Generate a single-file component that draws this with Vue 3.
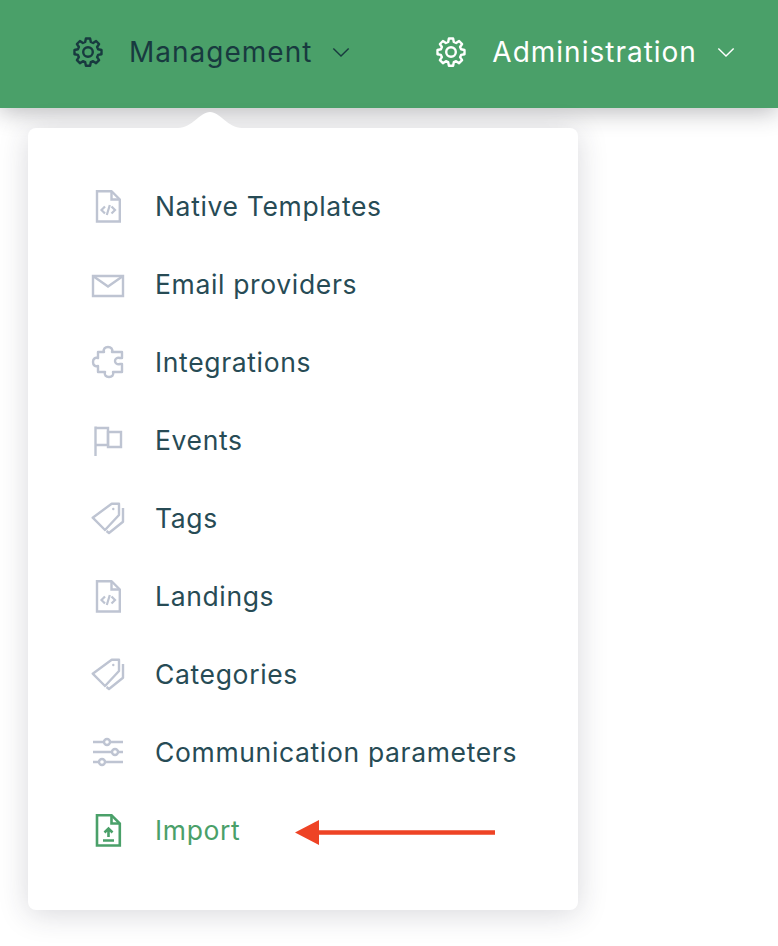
<script setup>
const items = [
  { label: 'Native Templates', icon: 'code' },
  { label: 'Email providers', icon: 'mail' },
  { label: 'Integrations', icon: 'puzzle' },
  { label: 'Events', icon: 'flag' },
  { label: 'Tags', icon: 'tags' },
  { label: 'Landings', icon: 'code' },
  { label: 'Categories', icon: 'tags' },
  { label: 'Communication parameters', icon: 'sliders' },
  { label: 'Import', icon: 'import', active: true },
]
const gear = 'M13.9 2.5h4.2l.7 3.5 2.3 1 3-2 3 3-2 3 1 2.3 3.4.7v4.2l-3.4.7-1 2.3 2 3-3 3-3-2-2.3 1-.7 3.5h-4.2l-.7-3.5-2.3-1-3 2-3-3 2-3-1-2.3-3.4-.7v-4.2l3.4-.7 1-2.3-2-3 3-3 3 2 2.3-1z'
</script>

<template>
  <div class="page">
    <header class="bar">
      <div class="nav dark">
        <svg class="gear" viewBox="0 0 32 32" fill="none" stroke="currentColor" stroke-width="2.400" stroke-linejoin="round"><path :d="gear"/><circle cx="16" cy="16" r="4.800"/></svg>
        <span class="nav-label">Management</span>
        <svg class="chev" viewBox="0 0 20 12" fill="none" stroke="currentColor" stroke-width="1.600"><path d="M1.500 1.500 10 10l8.500-8.500"/></svg>
      </div>
      <div class="nav light">
        <svg class="gear" viewBox="0 0 32 32" fill="none" stroke="currentColor" stroke-width="2.400" stroke-linejoin="round"><path :d="gear"/><circle cx="16" cy="16" r="4.800"/></svg>
        <span class="nav-label">Administration</span>
        <svg class="chev" viewBox="0 0 20 12" fill="none" stroke="currentColor" stroke-width="1.600"><path d="M1.500 1.500 10 10l8.500-8.500"/></svg>
      </div>
    </header>

    <div class="menu">
      <svg class="caret" viewBox="0 0 64 20"><path d="M0 20C14 20 22 4 32 4s18 16 32 16z" fill="#fff"/></svg>
      <ul class="list">
        <li v-for="item in items" :key="item.label" class="row" :class="{ active: item.active }">
          <span class="icon">
            <svg v-if="item.icon === 'code'" viewBox="0 0 34 34" fill="none" stroke="currentColor" stroke-width="2.400"><path d="M6 2.200h14.500L28.800 10.500v22H6z"/><path d="M20.500 2.200v8.300h8.300"/><path d="M14 17.500l-3.500 3.500L14 24.500M20.500 17.500 24 21l-3.500 3.500M18.800 16l-3 10" stroke-width="2.200"/></svg>
            <svg v-else-if="item.icon === 'mail'" viewBox="0 0 34 34" fill="none" stroke="currentColor" stroke-width="2.400"><path d="M2 9h30v20H2z"/><path d="M2 9l15 10.500L32 9"/></svg>
            <svg v-else-if="item.icon === 'puzzle'" viewBox="0 0 34 34" fill="none" stroke="currentColor" stroke-width="2.400" stroke-linejoin="round"><path d="M7 7h6c-1-3 1-5 4-5s5 2 4 5h10v6h-2c-3-1-5 1-5 3s2 4 5 3h2v8H22c1 3-1 5-4 5s-5-2-4-5H7v-6c-3 1-5-1-5-4s2-5 5-4z"/></svg>
            <svg v-else-if="item.icon === 'flag'" viewBox="0 0 34 34" fill="none" stroke="currentColor" stroke-width="2.400"><path d="M4.500 3.500V33"/><path d="M4.500 5H17v17H4.500"/><path d="M17 9h13v15H17z"/></svg>
            <svg v-else-if="item.icon === 'tags'" viewBox="0 0 34 34" fill="none" stroke="currentColor" stroke-width="2.400" stroke-linejoin="round"><path d="M1.700 16.700 20.700 2.700H28V14L14 29z"/><circle cx="22.300" cy="8" r="1.200" fill="currentColor" stroke="none"/><path d="M32 7v13.700L18 32l-2.500-2"/></svg>
            <svg v-else-if="item.icon === 'sliders'" viewBox="0 0 34 34" fill="none" stroke="currentColor" stroke-width="2.400"><path d="M2 7h11M19 7h13M2 17h19M27 17h5M2 27h6M14 27h18"/><circle cx="16" cy="7" r="3"/><circle cx="24" cy="17" r="3"/><circle cx="11" cy="27" r="3"/></svg>
            <svg v-else viewBox="0 0 34 34" fill="none" stroke="currentColor" stroke-width="2.600"><path d="M6 2.200h14.500L28.800 10.500v22H6z"/><path d="M20.500 2.200v8.300h8.300"/><path d="M17.500 24V15.500M13.500 19.500l4-4 4 4M12 27.500h11"/></svg>
          </span>
          <span class="label">{{ item.label }}</span>
          <svg v-if="item.active" class="arrow" viewBox="0 0 200 25"><path d="M0 12.500 24 0v10.300h176v4.400H24V25z" fill="#ee4325"/></svg>
        </li>
      </ul>
    </div>
  </div>
</template>

<style>
html, body { margin: 0; background: #fff; }
</style>

<style scoped>
.page {
  width: 778px;
  height: 946px;
  overflow: hidden;
  background: #fff;
  font-family: "Inter", "Noto Sans", sans-serif;
}
.bar {
  height: 108px;
  background: #4aa069;
  display: flex;
  align-items: center;
  padding: 0 0 4px 72px;
  gap: 85px;
  box-shadow: 0 4px 22px rgba(40, 40, 50, 0.32);
  position: relative;
  box-sizing: border-box;
}
.nav {
  display: flex;
  align-items: center;
}
.dark { color: #183a3f; }
.light { color: #fff; }
.gear { width: 32px; height: 32px; }
.nav-label {
  font-size: 28px;
  letter-spacing: 1px;
  margin-left: 25px;
  white-space: nowrap;
}
.chev { width: 18px; height: 11px; margin-left: 20px; }
.menu {
  position: relative;
  margin: 20px 0 0 28px;
  width: 550px;
  height: 782px;
  box-sizing: border-box;
  padding: 39px 0 41px;
  background: #fff;
  border-radius: 8px;
  box-shadow: 0 4px 30px rgba(40, 40, 60, 0.18);
}
.caret {
  position: absolute;
  top: -20px;
  left: 150px;
  width: 64px;
  height: 20px;
}
.list { list-style: none; margin: 0; padding: 0; }
.row {
  position: relative;
  height: 78px;
  display: flex;
  align-items: center;
  padding-left: 63px;
  color: #274b55;
}
.row.active { color: #4aa069; }
.icon {
  width: 34px;
  height: 34px;
  color: #bec4d2;
  display: flex;
}
.active .icon { color: #4aa069; }
.icon svg { width: 34px; height: 34px; }
.label {
  margin-left: 30px;
  font-size: 26.500px;
  letter-spacing: 0.650px;
  white-space: nowrap;
}
.arrow {
  position: absolute;
  left: 267px;
  top: 29px;
  width: 200px;
  height: 25px;
}
</style>
